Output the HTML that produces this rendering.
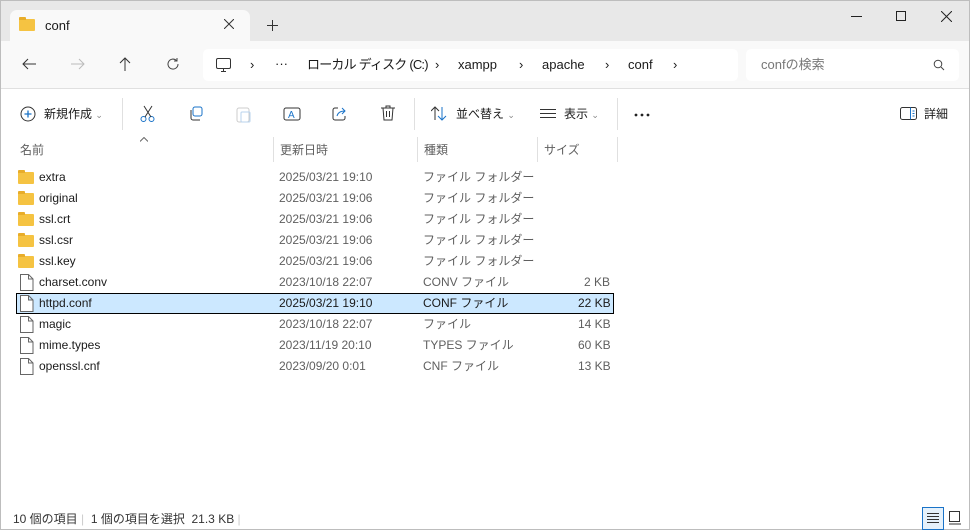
<!DOCTYPE html>
<html><head><meta charset="utf-8"><style>
*{margin:0;padding:0;box-sizing:border-box}
body{width:970px;height:530px;overflow:hidden;background:#fff;font-family:"Liberation Sans","Noto Sans CJK JP",sans-serif;font-size:12px;color:#1a1a1a;position:relative}
.win{position:absolute;left:0;top:0;width:970px;height:530px;border:1px solid #bdbdbd}
.abs{position:absolute}
.title{left:0;top:0;width:968px;height:40px;background:#e8e8e8}
.tab{left:9px;top:9px;width:240px;height:32px;background:#f9f9f9;border-radius:7px 7px 0 0}
.nav{left:0;top:40px;width:968px;height:48px;background:#f9f9f9;border-bottom:1px solid #e0e0e0}
.addr{left:202px;top:48px;width:535px;height:32px;background:#fff;border-radius:5px}
.search{left:745px;top:48px;width:213px;height:32px;background:#fff;border-radius:5px}
.t{position:absolute;white-space:nowrap;line-height:15px}
.sep{position:absolute;width:1px;background:#e0e0e0}
.gray{color:#5f5f5f}
.row{position:absolute;left:15px;width:598px;height:21px}
.folder{position:absolute;width:16px;height:12px;background:#f5c342;border-radius:1px}
.folder:before{content:"";position:absolute;left:0;top:-2px;width:7px;height:3px;background:#e8ad2a;border-radius:1px 1px 0 0}
</style></head><body>
<div class="win">
<div class="abs title"></div>
<div class="abs tab"></div>
<div class="folder" style="left:18px;top:18px"></div>
<div class="t" style="left:44px;top:17px;font-size:13px">conf</div>
<svg class="abs" style="left:223px;top:18px" width="10" height="10"><path d="M0 0l10 10M10 0L0 10" stroke="#333"/></svg>
<svg class="abs" style="left:266px;top:19px" width="11" height="11"><path d="M5.5 0v11M0 5.5h11" stroke="#333"/></svg>
<div class="abs" style="left:850px;top:15px;width:11px;height:1px;background:#222"></div>
<div class="abs" style="left:895px;top:10px;width:10px;height:10px;border:1px solid #222"></div>
<svg class="abs" style="left:940px;top:10px" width="11" height="11"><path d="M0 0l11 11M11 0L0 11" stroke="#222"/></svg>

<div class="abs nav"></div>
<div class="abs addr"></div>
<div class="abs search"></div>
<svg class="abs" style="left:21px;top:57px" width="14" height="12"><path d="M14 6H1M6 1L1 6l5 5" fill="none" stroke="#333"/></svg>
<svg class="abs" style="left:70px;top:57px" width="14" height="12"><path d="M0 6h13M8 1l5 5-5 5" fill="none" stroke="#bbb"/></svg>
<svg class="abs" style="left:118px;top:56px" width="12" height="14"><path d="M6 14V1M1 6l5-5 5 5" fill="none" stroke="#333"/></svg>
<svg class="abs" style="left:165px;top:56px" width="14" height="14"><path d="M12 7A5 5 0 1 1 10.5 3.5M11 1v3H8" fill="none" stroke="#444"/></svg>
<svg class="abs" style="left:214px;top:56px" width="18" height="16"><rect x="1.5" y="1.5" width="14" height="10" rx="1.5" fill="none" stroke="#333"/><path d="M6 14.5h5M8.5 11.5v3" stroke="#333"/></svg>
<div class="t" style="left:249px;top:56px;font-size:13px">›</div>
<div class="t" style="left:274px;top:55px;font-size:13px">···</div>
<div class="t" style="left:306px;top:56px;font-size:13px;letter-spacing:-0.8px">ローカル ディスク (C:)</div>
<div class="t" style="left:434px;top:56px;font-size:13px">›</div>
<div class="t" style="left:457px;top:56px;font-size:13px">xampp</div>
<div class="t" style="left:518px;top:56px;font-size:13px">›</div>
<div class="t" style="left:541px;top:56px;font-size:13px">apache</div>
<div class="t" style="left:604px;top:56px;font-size:13px">›</div>
<div class="t" style="left:627px;top:56px;font-size:13px">conf</div>
<div class="t" style="left:672px;top:56px;font-size:13px">›</div>
<div class="t" style="left:760px;top:56px;font-size:13px;color:#777">confの検索</div>
<svg class="abs" style="left:932px;top:58px" width="12" height="12"><circle cx="5" cy="5" r="3.8" fill="none" stroke="#444"/><path d="M8 8l3 3" stroke="#444"/></svg>

<svg class="abs" style="left:19px;top:105px" width="16" height="16"><circle cx="8" cy="8" r="7" fill="none" stroke="#333"/><path d="M8 4.5v7M4.5 8h7" stroke="#1a73c8" stroke-width="1.3"/></svg>
<div class="t" style="left:43px;top:106px">新規作成 <span style="color:#888;font-size:9px">⌄</span></div>
<div class="sep" style="left:121px;top:97px;height:32px"></div>
<svg class="abs" style="left:139px;top:104px" width="16" height="18"><circle cx="3.5" cy="14" r="2.5" fill="none" stroke="#1a73c8"/><circle cx="11.5" cy="14" r="2.5" fill="none" stroke="#1a73c8"/><path d="M4 1l7 11M12 1L5 12" stroke="#333"/></svg>
<svg class="abs" style="left:187px;top:105px" width="16" height="16"><rect x="5" y="1" width="9" height="9" rx="2" fill="none" stroke="#1a73c8"/><path d="M3 4v8a2 2 0 0 0 2 2h7" fill="none" stroke="#333"/></svg>
<svg class="abs" style="left:235px;top:104px" width="16" height="18"><rect x="1" y="3" width="12" height="14" rx="2" fill="none" stroke="#ccc"/><rect x="5" y="7" width="9" height="10" rx="1" fill="none" stroke="#b8d3ee"/></svg>
<svg class="abs" style="left:282px;top:105px" width="18" height="16"><rect x="1" y="2" width="16" height="12" rx="2" fill="none" stroke="#333"/><text x="5" y="12" font-size="10" fill="#1a73c8" font-family="Liberation Sans">A</text></svg>
<svg class="abs" style="left:331px;top:104px" width="16" height="16"><path d="M6 3H3a2 2 0 0 0-2 2v8a2 2 0 0 0 2 2h8a2 2 0 0 0 2-2v-2" fill="none" stroke="#333"/><path d="M5 11c1-4 4-5 8-5M10 3l3 3-3 3" fill="none" stroke="#1a73c8"/></svg>
<svg class="abs" style="left:379px;top:104px" width="16" height="17"><path d="M1 3h14M6 3V1h4v2M3 3l1 12h8l1-12M6.5 6v6M9.5 6v6" fill="none" stroke="#333"/></svg>
<div class="sep" style="left:413px;top:97px;height:32px"></div>
<svg class="abs" style="left:430px;top:105px" width="16" height="15"><path d="M4 14V1M0 5l4-4 4 4" fill="none" stroke="#333"/><path d="M11 1v13M7 10l4 4 4-4" fill="none" stroke="#1a73c8"/></svg>
<div class="t" style="left:455px;top:106px">並べ替え <span style="color:#888;font-size:9px">⌄</span></div>
<svg class="abs" style="left:539px;top:108px" width="16" height="10"><path d="M0 .5h16M0 4.5h16M0 8.5h16" stroke="#333"/></svg>
<div class="t" style="left:563px;top:106px">表示 <span style="color:#888;font-size:9px">⌄</span></div>
<div class="sep" style="left:616px;top:97px;height:32px"></div>
<svg class="abs" style="left:633px;top:112px" width="16" height="4"><circle cx="2" cy="2" r="1.4" fill="#222"/><circle cx="8" cy="2" r="1.4" fill="#222"/><circle cx="14" cy="2" r="1.4" fill="#222"/></svg>
<svg class="abs" style="left:899px;top:106px" width="18" height="13"><rect x=".5" y=".5" width="16" height="12" rx="2" fill="none" stroke="#333"/><path d="M10.5 .5v12" stroke="#1a73c8"/><path d="M12.5 4h2M12.5 6.5h2M12.5 9h2" stroke="#1a73c8"/></svg>
<div class="t" style="left:923px;top:106px">詳細</div>

<svg class="abs" style="left:139px;top:136px" width="8" height="5"><path d="M0 4.5L4 .5l4 4" fill="none" stroke="#666"/></svg>
<div class="t gray" style="left:19px;top:142px">名前</div>
<div class="sep" style="left:272px;top:136px;height:25px"></div>
<div class="t gray" style="left:279px;top:142px">更新日時</div>
<div class="sep" style="left:416px;top:136px;height:25px"></div>
<div class="t gray" style="left:423px;top:142px">種類</div>
<div class="sep" style="left:536px;top:136px;height:25px"></div>
<div class="t gray" style="left:543px;top:142px">サイズ</div>
<div class="sep" style="left:616px;top:136px;height:25px"></div>

<div class="row" style="top:292px;background:#cce8ff;border:1px solid #000"></div>

<div class="t" style="left:12px;top:511px;color:#333">10 個の項目 <span style="color:#ccc">|</span>&nbsp; 1 個の項目を選択 &nbsp;21.3 KB <span style="color:#ccc">|</span></div>
<div class="abs" style="left:921px;top:506px;width:22px;height:23px;background:#e5f1fb;border:1px solid #1a73c8"></div>
<svg class="abs" style="left:926px;top:512px" width="12" height="10"><path d="M0 .5h12M0 3.5h12M0 6.5h12M0 9.5h12" stroke="#333"/></svg>
<svg class="abs" style="left:948px;top:510px" width="12" height="14"><rect x=".5" y=".5" width="10" height="10" fill="none" stroke="#333"/><path d="M0 13h12" stroke="#333"/></svg>
</div>

<div style="position:absolute;left:0;top:0">
<div class="folder" style="left:18px;top:172px"></div><div class="t" style="left:39px;top:170px">extra</div><div class="t gray" style="left:279px;top:170px">2025/03/21 19:10</div><div class="t gray" style="left:423px;top:170px">ファイル フォルダー</div>
<div class="folder" style="left:18px;top:193px"></div><div class="t" style="left:39px;top:191px">original</div><div class="t gray" style="left:279px;top:191px">2025/03/21 19:06</div><div class="t gray" style="left:423px;top:191px">ファイル フォルダー</div>
<div class="folder" style="left:18px;top:214px"></div><div class="t" style="left:39px;top:212px">ssl.crt</div><div class="t gray" style="left:279px;top:212px">2025/03/21 19:06</div><div class="t gray" style="left:423px;top:212px">ファイル フォルダー</div>
<div class="folder" style="left:18px;top:235px"></div><div class="t" style="left:39px;top:233px">ssl.csr</div><div class="t gray" style="left:279px;top:233px">2025/03/21 19:06</div><div class="t gray" style="left:423px;top:233px">ファイル フォルダー</div>
<div class="folder" style="left:18px;top:256px"></div><div class="t" style="left:39px;top:254px">ssl.key</div><div class="t gray" style="left:279px;top:254px">2025/03/21 19:06</div><div class="t gray" style="left:423px;top:254px">ファイル フォルダー</div>

<svg class="abs" style="left:20px;top:274px" width="14" height="17"><path d="M.5 .5h8l4.5 4.5v11.5H.5z M8.5 .5v4.5H13" fill="#fff" stroke="#666"/></svg><div class="t" style="left:39px;top:275px">charset.conv</div><div class="t gray" style="left:279px;top:275px">2023/10/18 22:07</div><div class="t gray" style="left:423px;top:275px">CONV ファイル</div><div class="t gray" style="left:584px;top:275px">2 KB</div>
<svg class="abs" style="left:20px;top:295px" width="14" height="17"><path d="M.5 .5h8l4.5 4.5v11.5H.5z M8.5 .5v4.5H13" fill="#fff" stroke="#666"/></svg><div class="t" style="left:39px;top:296px">httpd.conf</div><div class="t" style="left:279px;top:296px">2025/03/21 19:10</div><div class="t" style="left:423px;top:296px">CONF ファイル</div><div class="t" style="left:578px;top:296px">22 KB</div>
<svg class="abs" style="left:20px;top:316px" width="14" height="17"><path d="M.5 .5h8l4.5 4.5v11.5H.5z M8.5 .5v4.5H13" fill="#fff" stroke="#666"/></svg><div class="t" style="left:39px;top:317px">magic</div><div class="t gray" style="left:279px;top:317px">2023/10/18 22:07</div><div class="t gray" style="left:423px;top:317px">ファイル</div><div class="t gray" style="left:578px;top:317px">14 KB</div>
<svg class="abs" style="left:20px;top:337px" width="14" height="17"><path d="M.5 .5h8l4.5 4.5v11.5H.5z M8.5 .5v4.5H13" fill="#fff" stroke="#666"/></svg><div class="t" style="left:39px;top:338px">mime.types</div><div class="t gray" style="left:279px;top:338px">2023/11/19 20:10</div><div class="t gray" style="left:423px;top:338px">TYPES ファイル</div><div class="t gray" style="left:578px;top:338px">60 KB</div>
<svg class="abs" style="left:20px;top:358px" width="14" height="17"><path d="M.5 .5h8l4.5 4.5v11.5H.5z M8.5 .5v4.5H13" fill="#fff" stroke="#666"/></svg><div class="t" style="left:39px;top:359px">openssl.cnf</div><div class="t gray" style="left:279px;top:359px">2023/09/20 0:01</div><div class="t gray" style="left:423px;top:359px">CNF ファイル</div><div class="t gray" style="left:578px;top:359px">13 KB</div>
</div>
</body></html>
